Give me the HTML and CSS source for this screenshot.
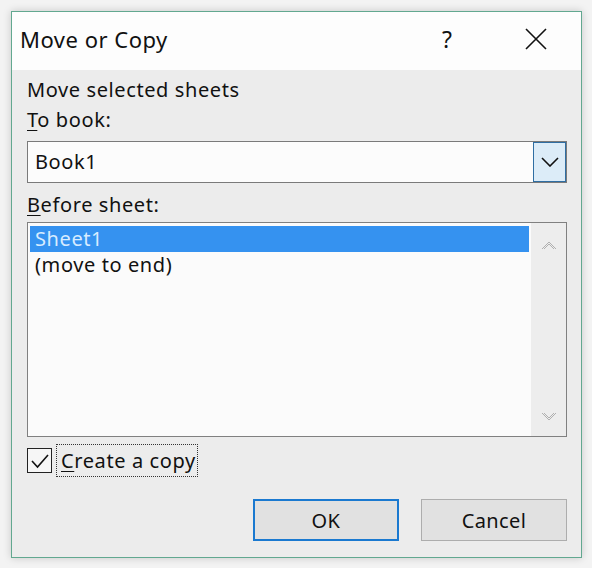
FILE: index.html
```html
<!DOCTYPE html>
<html>
<head>
<meta charset="utf-8">
<link rel="stylesheet" href="styles.css">
</head>
<body>
<div class="dialog">
  <div class="titlebar">
    <span class="title">Move or Copy</span>
    <span class="help">?</span>
    <svg class="close" width="24" height="24" viewBox="0 0 24 24"><path d="M2 2 L22 22 M22 2 L2 22" stroke="#111" stroke-width="1.6" fill="none"/></svg>
  </div>
  <div class="body">
    <div class="label">Move selected sheets</div>
    <div class="label"><u>T</u>o book:</div>
    <div class="combo">
      <span class="combo-text">Book1</span>
      <span class="combo-btn"><svg width="18" height="10" viewBox="0 0 18 10"><path d="M1 1 L9 9 L17 1" stroke="#111" stroke-width="1.6" fill="none"/></svg></span>
    </div>
    <div class="label label-before"><u>B</u>efore sheet:</div>
    <div class="listbox">
      <div class="items">
        <div class="item selected">Sheet1</div>
        <div class="item">(move to end)</div>
      </div>
      <div class="scrollbar">
        <svg width="16" height="10" viewBox="0 0 16 10"><path d="M1 9 L8 2 L15 9 M3 9 L8 4 L13 9" stroke="#b0b0b0" stroke-width="1" fill="none"/></svg>
        <svg width="16" height="10" viewBox="0 0 16 10"><path d="M1 1 L8 8 L15 1 M3 1 L8 6 L13 1" stroke="#b0b0b0" stroke-width="1" fill="none"/></svg>
      </div>
    </div>
    <div class="check-row">
      <span class="checkbox"><svg width="22" height="22" viewBox="0 0 22 22"><path d="M3 11 L8.5 17 L19 5" stroke="#111" stroke-width="1.6" fill="none"/></svg></span>
      <span class="check-label"><u>C</u>reate a copy</span>
    </div>
    <div class="buttons">
      <div class="btn btn-default">OK</div>
      <div class="btn">Cancel</div>
    </div>
  </div>
</div>
</body>
</html>
```
FILE: styles.css
```css
html, body {
  margin: 0;
  padding: 0;
}
body {
  background: #f3f3f3;
  width: 592px;
  height: 568px;
  overflow: hidden;
  font-family: "Noto Sans", "Open Sans", sans-serif;
  color: #111;
}
.dialog {
  margin: 11px 0 0 11px;
  width: 569px;
  height: 545px;
  border: 1px solid #62a890;
  background: #ececec;
  box-shadow: 0 0 8px rgba(0, 0, 0, 0.18);
  display: flex;
  flex-direction: column;
}
.titlebar {
  height: 58px;
  background: #fdfdfd;
  display: flex;
  align-items: center;
  padding-left: 8px;
}
.title {
  font-size: 22px;
  letter-spacing: 0.5px;
  flex: 1;
  position: relative;
  top: -2px;
}
.help {
  font-size: 23px;
  width: 20px;
  text-align: center;
  margin-right: 67px;
  position: relative;
  top: -2px;
}
.close {
  margin-right: 33px;
  position: relative;
  top: -2px;
}
.body {
  padding: 5px 14px 0 15px;
  display: flex;
  flex-direction: column;
}
.label {
  font-size: 20px;
  letter-spacing: 0.6px;
  line-height: 30px;
  height: 30px;
  padding-left: 0;
}
.label u, .check-label u {
  text-decoration-thickness: 1px;
  text-underline-offset: 3px;
}
.combo {
  margin-top: 6px;
  height: 40px;
  border: 1px solid #7a7a7a;
  background: #fcfcfc;
  display: flex;
  align-items: stretch;
}
.combo-text {
  flex: 1;
  font-size: 20px;
  letter-spacing: 0.6px;
  line-height: 40px;
  padding-left: 7px;
}
.combo-btn {
  width: 31px;
  border: 1px solid #2f6ea3;
  background: #dcecf8;
  display: flex;
  align-items: center;
  justify-content: center;
  margin-right: 0;
}
.label-before {
  margin-top: 7px;
}
.listbox {
  margin-top: 2px;
  height: 213px;
  border: 1px solid #808080;
  background: #fbfbfb;
  display: flex;
}
.items {
  flex: 1;
  padding: 3px 2px 0 2px;
}
.item {
  height: 26px;
  line-height: 26px;
  font-size: 20px;
  letter-spacing: 0.6px;
  padding-left: 5px;
}
.selected {
  background: #3592f0;
  color: #d8ecff;
}
.scrollbar {
  width: 35px;
  background: #ededed;
  display: flex;
  flex-direction: column;
  justify-content: space-between;
  align-items: center;
  padding: 17px 0 14px 0;
}
.check-row {
  margin-top: 7px;
  height: 33px;
  display: flex;
  align-items: center;
}
.checkbox {
  width: 23px;
  height: 23px;
  border: 1px solid #222;
  background: #f6f6f6;
  display: flex;
  align-items: center;
  justify-content: center;
  margin-right: 4px;
}
.check-label {
  font-size: 20px;
  letter-spacing: 0.6px;
  line-height: 31px;
  border: 1px dotted #333;
  padding: 0 1px 0 4px;
}
.buttons {
  margin-top: 22px;
  display: flex;
  justify-content: flex-end;
  gap: 22px;
}
.btn {
  width: 144px;
  height: 40px;
  border: 1px solid #adadad;
  background: #e1e1e1;
  font-size: 20px;
  letter-spacing: 0.4px;
  display: flex;
  align-items: center;
  justify-content: center;
}
.btn-default {
  width: 142px;
  height: 38px;
  border: 2px solid #1a79d0;
}
```
